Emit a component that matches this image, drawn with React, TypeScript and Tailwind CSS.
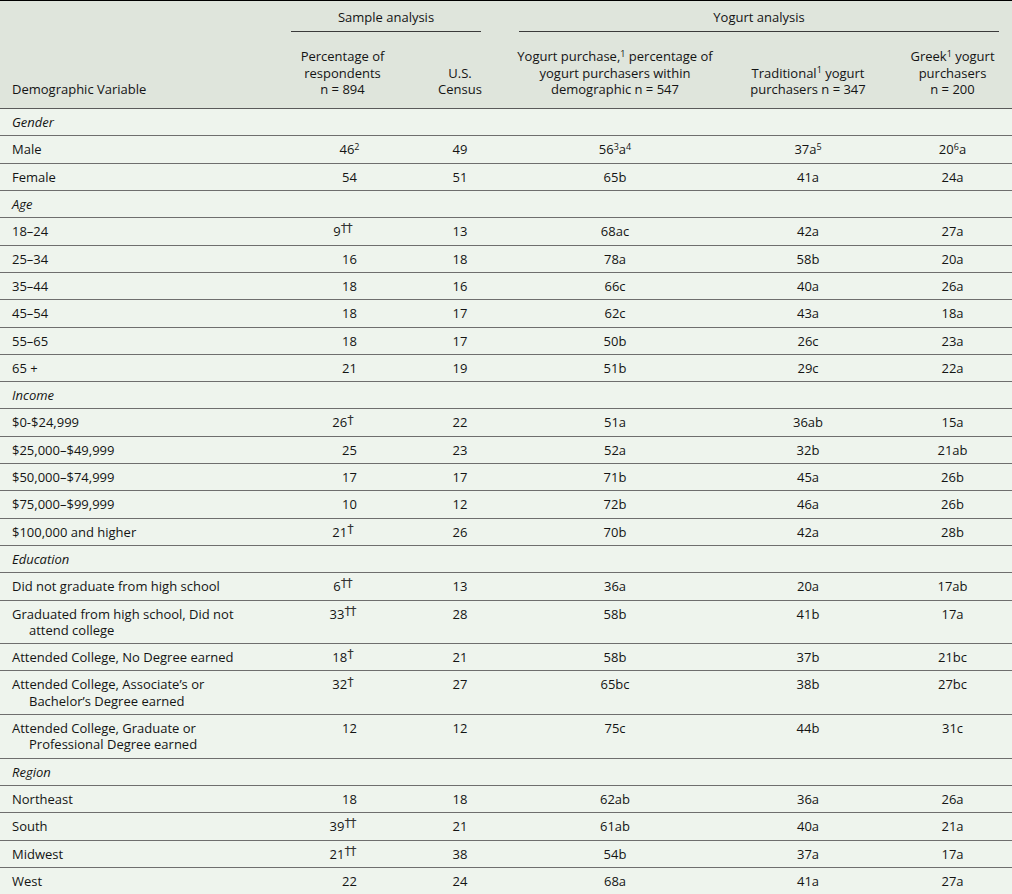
import React from 'react';

type Row =
  | { kind: 'section'; label: string }
  | {
      kind: 'data';
      label: string[];
      pct: React.ReactNode;
      plain?: boolean;
      census: string;
      y1: React.ReactNode;
      y2: React.ReactNode;
      y3: React.ReactNode;
    };

const cols = 'grid grid-cols-[272px_141px_94px_216px_170px_119px]';

const Dag = ({ n }: { n: number }) => (
  <span className="relative top-[-0.3em] text-[13px] font-['DejaVu_Sans',sans-serif] font-normal leading-none tracking-[-1px] text-[#333]">
    {n === 2 ? '††' : '†'}
  </span>
);

const Sup = ({ children }: { children: React.ReactNode }) => (
  <sup className="text-[9px]">{children}</sup>
);

const pct = (v: string, d = 0) => (d ? <>{v}<Dag n={d} /></> : v);

const data = (
  label: string | string[],
  p: string,
  d: number,
  census: string,
  y1: React.ReactNode,
  y2: React.ReactNode,
  y3: React.ReactNode
): Row => ({
  kind: 'data',
  label: Array.isArray(label) ? label : [label],
  pct: pct(p, d),
  plain: d === 0,
  census,
  y1,
  y2,
  y3,
});

const rows: Row[] = [
  { kind: 'section', label: 'Gender' },
  {
    kind: 'data',
    label: ['Male'],
    pct: <>46<Sup>2</Sup></>,
    plain: true,
    census: '49',
    y1: <>56<Sup>3</Sup>a<Sup>4</Sup></>,
    y2: <>37a<Sup>5</Sup></>,
    y3: <>20<Sup>6</Sup>a</>,
  },
  data('Female', '54', 0, '51', '65b', '41a', '24a'),
  { kind: 'section', label: 'Age' },
  data('18–24', '9', 2, '13', '68ac', '42a', '27a'),
  data('25–34', '16', 0, '18', '78a', '58b', '20a'),
  data('35–44', '18', 0, '16', '66c', '40a', '26a'),
  data('45–54', '18', 0, '17', '62c', '43a', '18a'),
  data('55–65', '18', 0, '17', '50b', '26c', '23a'),
  data('65 +', '21', 0, '19', '51b', '29c', '22a'),
  { kind: 'section', label: 'Income' },
  data('$0-$24,999', '26', 1, '22', '51a', '36ab', '15a'),
  data('$25,000–$49,999', '25', 0, '23', '52a', '32b', '21ab'),
  data('$50,000–$74,999', '17', 0, '17', '71b', '45a', '26b'),
  data('$75,000–$99,999', '10', 0, '12', '72b', '46a', '26b'),
  data('$100,000 and higher', '21', 1, '26', '70b', '42a', '28b'),
  { kind: 'section', label: 'Education' },
  data('Did not graduate from high school', '6', 2, '13', '36a', '20a', '17ab'),
  data(['Graduated from high school, Did not', 'attend college'], '33', 2, '28', '58b', '41b', '17a'),
  data('Attended College, No Degree earned', '18', 1, '21', '58b', '37b', '21bc'),
  data(['Attended College, Associate’s or', 'Bachelor’s Degree earned'], '32', 1, '27', '65bc', '38b', '27bc'),
  data(['Attended College, Graduate or', 'Professional Degree earned'], '12', 0, '12', '75c', '44b', '31c'),
  { kind: 'section', label: 'Region' },
  data('Northeast', '18', 0, '18', '62ab', '36a', '26a'),
  data('South', '39', 2, '21', '61ab', '40a', '21a'),
  data('Midwest', '21', 2, '38', '54b', '37a', '17a'),
  data('West', '22', 0, '24', '68a', '41a', '27a'),
];

export default function App() {
  return (
    <div className="w-[1012px] h-[894px] bg-[#eef4ed] text-[#141414] text-[13px] leading-[16.3px] font-['Open_Sans',sans-serif]">
      {/* Header */}
      <div className="bg-[#dfe5dc] border-t border-black">
        <div className={cols}>
          <div />
          <div className="col-span-2 pt-[8px]">
            <div className="ml-[19px] mr-[26px] pb-[6px] border-b border-[#3a3a3a] text-center">Sample analysis</div>
          </div>
          <div className="col-span-3 pt-[8px]">
            <div className="ml-[12px] mr-[13px] pb-[6px] border-b border-[#3a3a3a] text-center">Yogurt analysis</div>
          </div>
        </div>
        <div className={`${cols} items-end pt-[16px] pb-[11px] border-b border-[#5a5a5a]`}>
          <div className="pl-[12px]">Demographic Variable</div>
          <div className="text-center">
            Percentage of
            <br />
            respondents
            <br />
            n = 894
          </div>
          <div className="text-center">
            U.S.
            <br />
            Census
          </div>
          <div className="text-center">
            Yogurt purchase,<Sup>1</Sup> percentage of
            <br />
            yogurt purchasers within
            <br />
            demographic n = 547
          </div>
          <div className="text-center">
            Traditional<Sup>1</Sup> yogurt
            <br />
            purchasers n = 347
          </div>
          <div className="text-center">
            Greek<Sup>1</Sup> yogurt
            <br />
            purchasers
            <br />n = 200
          </div>
        </div>
      </div>

      {/* Body */}
      {rows.map((row, i) => {
        const last = i === rows.length - 1;
        const border = last ? 'border-b-2 border-black' : 'border-b border-[#6e6e6e]';
        if (row.kind === 'section') {
          return (
            <div key={i} className={`${cols} py-[5px] ${border}`}>
              <div className="pl-[12px] italic">{row.label}</div>
            </div>
          );
        }
        return (
          <div key={i} className={`${cols} items-start py-[5px] ${border}`}>
            <div className="pl-[12px]">
              {row.label.map((l, j) => (
                <div key={j} className={j > 0 ? 'pl-[17px]' : ''}>
                  {l}
                </div>
              ))}
            </div>
            <div className={`text-center whitespace-nowrap ${row.plain ? 'pl-[14px]' : ''}`}>{row.pct}</div>
            <div className="text-center">{row.census}</div>
            <div className="text-center">{row.y1}</div>
            <div className="text-center">{row.y2}</div>
            <div className="text-center">{row.y3}</div>
          </div>
        );
      })}
    </div>
  );
}
